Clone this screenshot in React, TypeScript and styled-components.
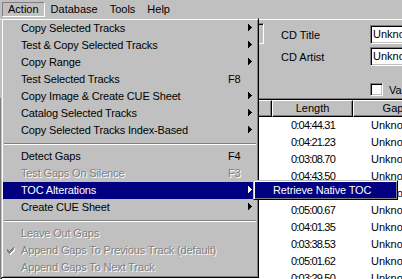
import styled, { createGlobalStyle } from "styled-components";

const GlobalStyle = createGlobalStyle`
  html, body {
    margin: 0;
    padding: 0;
    background: #c0c0c0;
    overflow: hidden;
  }
  body {
    font-family: "Liberation Sans", Arial, sans-serif;
    font-size: 11px;
    color: #000;
  }
`;

const Window = styled.div`
  position: relative;
  width: 402px;
  height: 279px;
  overflow: hidden;
  background: #c0c0c0;
  display: flex;
  flex-direction: column;
`;

/* top menu bar */
const MenuBar = styled.div`
  display: flex;
  align-items: flex-start;
  height: 19px;
  padding: 2px 0 0 2px;
  box-sizing: border-box;
  flex: none;
`;

const MenuTitle = styled.div<{ $open?: boolean }>`
  height: 15px;
  box-sizing: border-box;
  padding: 0 5px;
  line-height: 13px;
  border: 1px solid transparent;
  border-color: ${({ $open }) =>
    $open ? "#808080 #fff #fff #808080" : "transparent"};
  white-space: nowrap;
`;

/* 3px classic frame shared by both popups */
const Popup = styled.div`
  position: absolute;
  box-sizing: border-box;
  background: #c0c0c0;
  border: 1px solid;
  border-color: #c0c0c0 #000 #000 #c0c0c0;
  box-shadow: inset 1px 1px 0 #fff, inset -1px -1px 0 #808080;
  padding: 1px;
  z-index: 10;
  letter-spacing: -0.15px;
`;

const Dropdown = styled(Popup)`
  left: 1px;
  top: 18px;
  width: 258px;
`;

const SubMenu = styled(Popup)`
  left: 253px;
  top: 180px;
  width: 145px;
  z-index: 11;
`;

const Item = styled.div<{ $active?: boolean; $disabled?: boolean }>`
  display: grid;
  grid-template-columns: 18px 1fr 20px 4px;
  align-items: center;
  height: 17px;
  line-height: 17px;
  padding-right: 5px;
  white-space: nowrap;
  background: ${({ $active }) => ($active ? "#000080" : "transparent")};
  color: ${({ $active, $disabled }) =>
    $active ? "#fff" : $disabled ? "#808080" : "#000"};
  text-shadow: ${({ $disabled }) => ($disabled ? "1px 1px 0 #fff" : "none")};
`;

const SubItem = styled(Item)`
  height: 16px;
  line-height: 16px;
`;

const Gutter = styled.span`
  display: flex;
  align-items: center;
  padding-left: 4px;
  height: 100%;
`;

const Shortcut = styled.span`
  overflow: hidden;
`;

const ArrowCell = styled.span`
  display: flex;
  align-items: center;
  margin-bottom: 2px;
`;

const Separator = styled.div`
  height: 9px;
  box-sizing: border-box;
  padding-top: 4px;
  margin: 0 1px;

  &::after {
    content: "";
    display: block;
    border-top: 1px solid #808080;
    border-bottom: 1px solid #fff;
  }
`;

/* window content under the menu */
const Body = styled.div`
  flex: 1;
  display: flex;
  flex-direction: column;
  min-height: 0;
`;

const InfoPanel = styled.div`
  height: 79px;
  box-sizing: border-box;
  border-top: 1px solid #fff;
  display: grid;
  grid-template-columns: 281px 1fr;
  flex: none;
`;

const LeftArea = styled.div`
  display: flex;
  justify-content: flex-end;
  align-items: flex-start;
  padding: 3px 17px 0 0;
`;

const SunkenBox = styled.div`
  width: 100px;
  height: 21px;
  box-sizing: border-box;
  border: 1px solid;
  border-color: #808080 #fff #fff #808080;
  box-shadow: inset 1px 1px 0 #000, inset -1px -1px 0 #c0c0c0;
`;

const Fields = styled.div`
  display: flex;
  flex-direction: column;
  gap: 3px;
  padding-top: 5px;
`;

const FieldRow = styled.div<{ $gapTop?: number }>`
  display: grid;
  grid-template-columns: 89px 160px;
  align-items: center;
  margin-top: ${({ $gapTop }) => $gapTop ?? 0}px;
`;

const Label = styled.span`
  white-space: nowrap;
`;

const TextBox = styled.div`
  height: 19px;
  box-sizing: border-box;
  border: 1px solid;
  border-color: #808080 #fff #fff #808080;
  box-shadow: inset 1px 1px 0 #000, inset -1px -1px 0 #c0c0c0;
  background: #fff;
  padding-left: 2px;
  line-height: 17px;
  white-space: nowrap;
  overflow: hidden;
`;

const CheckLine = styled.div`
  display: flex;
  align-items: center;
  gap: 6px;
  white-space: nowrap;
`;

const CheckBox = styled.span`
  width: 13px;
  height: 13px;
  box-sizing: border-box;
  border: 1px solid;
  border-color: #808080 #fff #fff #808080;
  box-shadow: inset 1px 1px 0 #000, inset -1px -1px 0 #c0c0c0;
  background: #fff;
  flex: none;
`;

const ListFrame = styled.div`
  flex: 1;
  border-top: 1px solid #808080;
  border-left: 1px solid #808080;
  background: #fff;
`;

const ListInner = styled.div`
  border-top: 1px solid #000;
  border-left: 1px solid #000;
  height: 100%;
`;

/* first column sits under the open menu; the visible ones start at x=272 */
const COLS = "270px 81px 80px";

const HeaderRow = styled.div`
  display: grid;
  grid-template-columns: ${COLS};
  background: #c0c0c0;
`;

const HeaderCell = styled.div`
  height: 17px;
  box-sizing: border-box;
  border-top: 1px solid #fff;
  border-left: 1px solid #fff;
  border-right: 1px solid #000;
  border-bottom: 1px solid #000;
  box-shadow: inset -1px -1px 0 #808080;
  line-height: 15px;
  text-align: center;
  white-space: nowrap;
  overflow: hidden;
`;

const DataRow = styled.div`
  display: grid;
  grid-template-columns: ${COLS};
  height: 17px;
  line-height: 17px;
  white-space: nowrap;
`;

const Cell = styled.div<{ $pad?: number; $tight?: boolean }>`
  padding-left: ${({ $pad }) => $pad ?? 2}px;
  letter-spacing: ${({ $tight }) => ($tight ? "-0.8px" : "normal")};
  overflow: hidden;
`;

function Arrow({ color }: { color: string }) {
  return (
    <svg width="4" height="7" viewBox="0 0 4 7" shapeRendering="crispEdges">
      <path
        d="M0 0h1v7h-1z M1 1h1v5h-1z M2 2h1v3h-1z M3 3h1v1h-1z"
        fill={color}
      />
    </svg>
  );
}

const CHECK =
  "M6 0h1v1h-1z M5 1h2v1h-2z M0 2h1v1h-1z M4 2h3v1h-3z M0 3h2v1h-2z M3 3h3v1h-3z M0 4h5v1h-5z M1 5h3v1h-3z M2 6h1v1h-1z";

function CheckMark() {
  return (
    <svg width="8" height="8" viewBox="0 0 8 8" shapeRendering="crispEdges">
      <path d={CHECK} fill="#fff" transform="translate(1 1)" />
      <path d={CHECK} fill="#808080" />
    </svg>
  );
}

type MenuEntry =
  | "sep"
  | {
      label: string;
      key?: string;
      sub?: boolean;
      disabled?: boolean;
      active?: boolean;
      checked?: boolean;
    };

const ACTION_MENU: MenuEntry[] = [
  { label: "Copy Selected Tracks", sub: true },
  { label: "Test & Copy Selected Tracks", sub: true },
  { label: "Copy Range", sub: true },
  { label: "Test Selected Tracks", key: "F8" },
  { label: "Copy Image & Create CUE Sheet", sub: true },
  { label: "Catalog Selected Tracks", sub: true },
  { label: "Copy Selected Tracks Index-Based", sub: true },
  "sep",
  { label: "Detect Gaps", key: "F4" },
  { label: "Test Gaps On Silence", key: "F3", disabled: true },
  { label: "TOC Alterations", sub: true, active: true },
  { label: "Create CUE Sheet", sub: true },
  "sep",
  { label: "Leave Out Gaps", disabled: true },
  {
    label: "Append Gaps To Previous Track (default)",
    disabled: true,
    checked: true,
  },
  { label: "Append Gaps To Next Track", disabled: true },
];

const TRACKS = [
  "0:04:44.31",
  "0:04:21.23",
  "0:03:08.70",
  "0:04:43.50",
  "0:03:57.12",
  "0:05:00.67",
  "0:04:01.35",
  "0:03:38.53",
  "0:05:01.62",
  "0:03:29.50",
];

export default function App() {
  return (
    <>
      <GlobalStyle />
      <Window>
        <MenuBar>
          <MenuTitle $open>Action</MenuTitle>
          <MenuTitle>Database</MenuTitle>
          <MenuTitle>Tools</MenuTitle>
          <MenuTitle>Help</MenuTitle>
        </MenuBar>

        <Body>
          <InfoPanel>
            <LeftArea>
              <SunkenBox />
            </LeftArea>
            <Fields>
              <FieldRow>
                <Label>CD Title</Label>
                <TextBox>Unknown Title</TextBox>
              </FieldRow>
              <FieldRow>
                <Label>CD Artist</Label>
                <TextBox>Unknown Artist</TextBox>
              </FieldRow>
              <FieldRow $gapTop={14}>
                <span />
                <CheckLine>
                  <CheckBox />
                  Various Artists
                </CheckLine>
              </FieldRow>
            </Fields>
          </InfoPanel>

          <ListFrame>
            <ListInner>
              <HeaderRow>
                <HeaderCell />
                <HeaderCell>Length</HeaderCell>
                <HeaderCell>Gap</HeaderCell>
              </HeaderRow>
              {TRACKS.map((len, i) => (
                <DataRow key={i}>
                  <Cell />
                  <Cell $pad={19} $tight>
                    {len}
                  </Cell>
                  <Cell $pad={18}>Unknown</Cell>
                </DataRow>
              ))}
            </ListInner>
          </ListFrame>
        </Body>

        <Dropdown>
          {ACTION_MENU.map((entry, i) =>
            entry === "sep" ? (
              <Separator key={i} />
            ) : (
              <Item key={i} $active={entry.active} $disabled={entry.disabled}>
                <Gutter>{entry.checked ? <CheckMark /> : null}</Gutter>
                <span>{entry.label}</span>
                <Shortcut>{entry.key ?? ""}</Shortcut>
                <ArrowCell>
                  {entry.sub ? (
                    <Arrow color={entry.active ? "#fff" : "#000"} />
                  ) : null}
                </ArrowCell>
              </Item>
            )
          )}
        </Dropdown>

        <SubMenu>
          <SubItem $active>
            <Gutter />
            <span>Retrieve Native TOC</span>
            <Shortcut />
            <ArrowCell />
          </SubItem>
        </SubMenu>
      </Window>
    </>
  );
}
